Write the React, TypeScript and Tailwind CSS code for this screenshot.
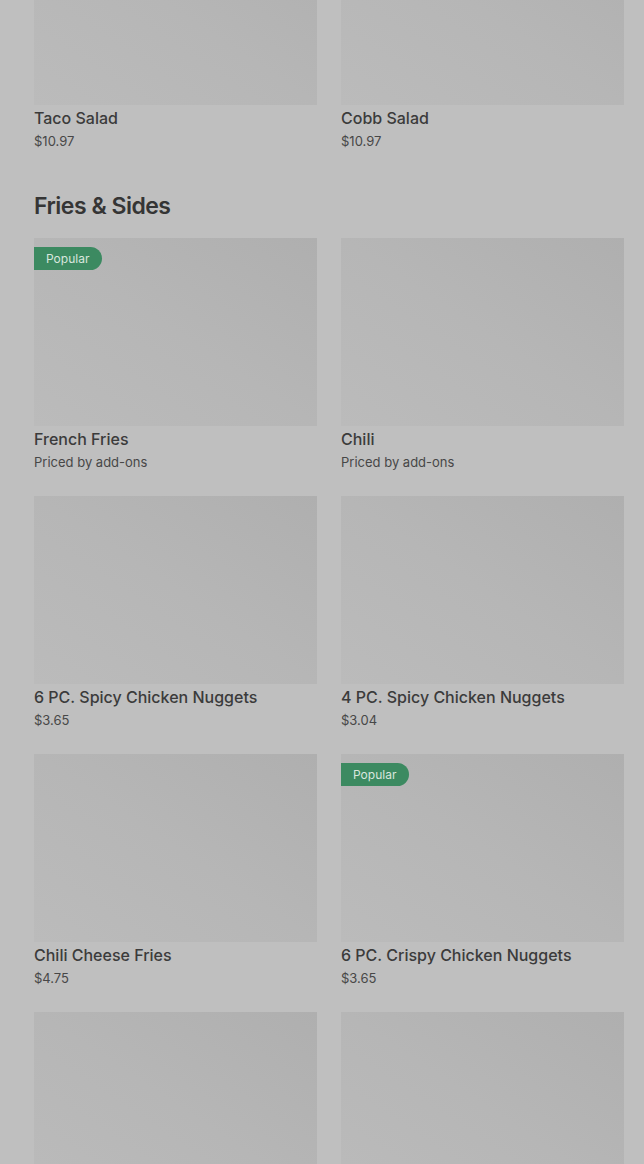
const topItems = [
  { name: "Taco Salad", price: "$10.97" },
  { name: "Cobb Salad", price: "$10.97" },
];

const sides = [
  { name: "French Fries", price: "Priced by add-ons", popular: true },
  { name: "Chili", price: "Priced by add-ons" },
  { name: "6 PC. Spicy Chicken Nuggets", price: "$3.65" },
  { name: "4 PC. Spicy Chicken Nuggets", price: "$3.04" },
  { name: "Chili Cheese Fries", price: "$4.75" },
  { name: "6 PC. Crispy Chicken Nuggets", price: "$3.65", popular: true },
  { name: "", price: "" },
  { name: "", price: "" },
];

type Item = { name: string; price: string; popular?: boolean };

function MenuCard({ item }: { item: Item }) {
  return (
    <div className="flex flex-col">
      <div className="relative h-[188px] w-full bg-gradient-to-tr from-[#bbbbbb] via-[#b6b6b6] to-[#afafaf]">
        {item.popular && (
          <span className="absolute left-0 top-[9px] flex h-[23px] items-center rounded-r-full bg-[#3c8a61] pl-3 pr-[13px] text-[12px] text-[#d9e6de]">
            Popular
          </span>
        )}
      </div>
      {item.name && (
        <div className="pt-px">
          <p className="text-[16px] font-medium leading-[24px] text-[#3b3b3b]">
            {item.name}
          </p>
          <p className="text-[13px] leading-[22px] text-[#474747]">
            {item.price}
          </p>
        </div>
      )}
    </div>
  );
}

export default function App() {
  return (
    <div className="h-[1164px] overflow-hidden bg-[#bfbfbf] font-['Inter',sans-serif]">
      <div className="-mt-[83px] pl-[34px] pr-[20px]">
        <div className="grid grid-cols-2 gap-x-6">
          {topItems.map((item) => (
            <MenuCard key={item.name} item={item} />
          ))}
        </div>

        <h2 className="mt-[38px] text-[23px] font-semibold leading-[32px] tracking-[-0.5px] text-[#353535]">
          Fries &amp; Sides
        </h2>

        <div className="mt-[16px] grid grid-cols-2 gap-x-6 gap-y-[23px]">
          {sides.map((item, i) => (
            <MenuCard key={i} item={item} />
          ))}
        </div>
      </div>
    </div>
  );
}
